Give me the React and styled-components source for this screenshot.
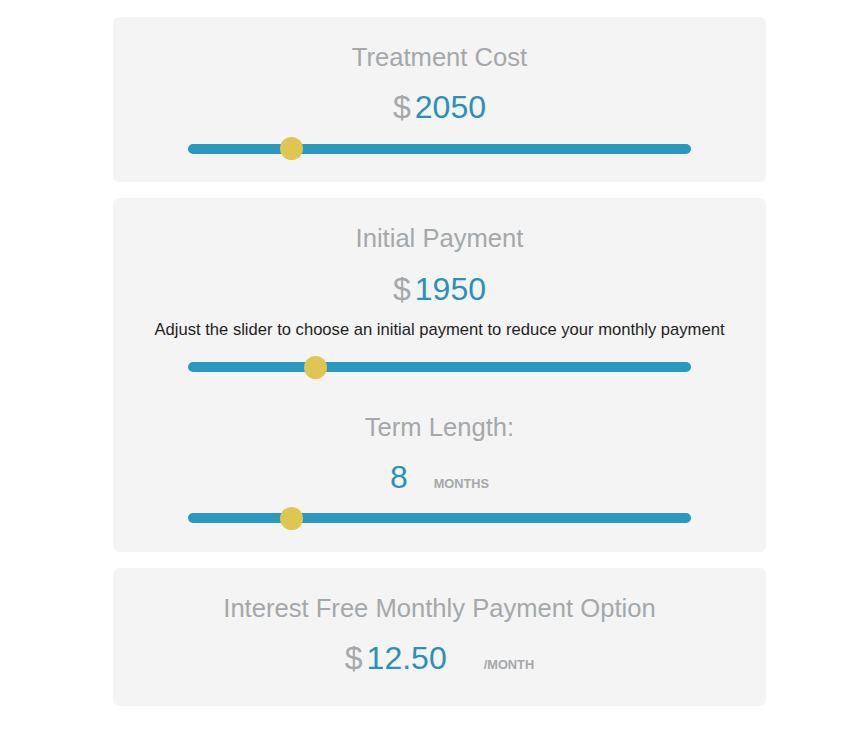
import React from 'react';
import styled, { createGlobalStyle } from 'styled-components';

const GlobalStyle = createGlobalStyle`
    body {
        margin: 0;
        background: #ffffff;
        font-family: "Liberation Sans", Arial, Helvetica, sans-serif;
    }
`

const Slider = ({ value, min, max }) => {
    const frac = (value - min) / (max - min);
    return (
        <SliderWrap>
            <Track>
                <Thumb style={{ left: `calc(${frac} * (100% - 23px))` }} />
            </Track>
        </SliderWrap>
    );
}

const Amount = ({ currency, value, unit, unitGap }) => (
    <AmountRow>
        {currency && <Currency>{currency}</Currency>}
        <Value>{value}</Value>
        {unit && <Unit $gap={unitGap}>{unit}</Unit>}
    </AmountRow>
);

const App = () => {
    return (
        <Page>
            <GlobalStyle />
            <Card>
                <Title>Treatment Cost</Title>
                <Amount currency="$" value="2050" />
                <Slider value={2050} min={500} max={8550} />
            </Card>

            <Card>
                <Title>Initial Payment</Title>
                <Amount currency="$" value="1950" />
                <Hint>Adjust the slider to choose an initial payment to reduce your monthly payment</Hint>
                <Slider value={1950} min={0} max={8100} />

                <Section>
                    <Title>Term Length:</Title>
                    <Amount value="8" unit="MONTHS" unitGap={26} />
                    <Slider value={8} min={3} max={29} />
                </Section>
            </Card>

            <Card $last>
                <Title>Interest Free Monthly Payment Option</Title>
                <Amount currency="$" value="12.50" unit="/MONTH" unitGap={37} />
            </Card>
        </Page>
    );
}

const Page = styled.div`
    width: 653px;
    padding: 17px 0 30px 113px;
    display: flex;
    flex-direction: column;
    gap: 16px;
`

const Card = styled.section`
    background-color: #f4f4f4;
    border-radius: 6px;
    padding: 26px 20px ${props => props.$last ? '29px' : '22px'};
    display: flex;
    flex-direction: column;
    align-items: center;
    text-align: center;
`

const Section = styled.div`
    margin-top: 34px;
    width: 100%;
    display: flex;
    flex-direction: column;
    align-items: center;
`

const Title = styled.h2`
    margin: 0 0 17px;
    font-size: 25.6px;
    font-weight: normal;
    line-height: 1.15;
    color: #a4a8ab;
`

const AmountRow = styled.div`
    display: flex;
    align-items: baseline;
    justify-content: center;
    font-size: 32px;
    line-height: 1.15;
`

const Currency = styled.span`
    color: #a4a8ab;
    margin-right: 4px;
`

const Value = styled.span`
    color: #2a91bb;
`

const Unit = styled.span`
    margin-left: ${props => props.$gap || 20}px;
    font-size: 12.8px;
    font-weight: bold;
    color: #a4a8ab;
`

const Hint = styled.p`
    margin: 13px 0 0;
    font-size: 16.6px;
    line-height: 1.15;
    color: #1f1f1f;
`

const SliderWrap = styled.div`
    align-self: stretch;
    margin: 11px 55px 0;
    height: 23px;
    display: flex;
    align-items: center;
    ${Hint} + & {
        margin-top: 16px;
    }
`

const Track = styled.div`
    position: relative;
    width: 100%;
    height: 10px;
    border-radius: 5px;
    background-color: #2a98bf;
`

const Thumb = styled.span`
    position: absolute;
    top: 50%;
    width: 23px;
    height: 23px;
    margin-top: -11.5px;
    border-radius: 50%;
    background-color: #dfc552;
`

export default App;
